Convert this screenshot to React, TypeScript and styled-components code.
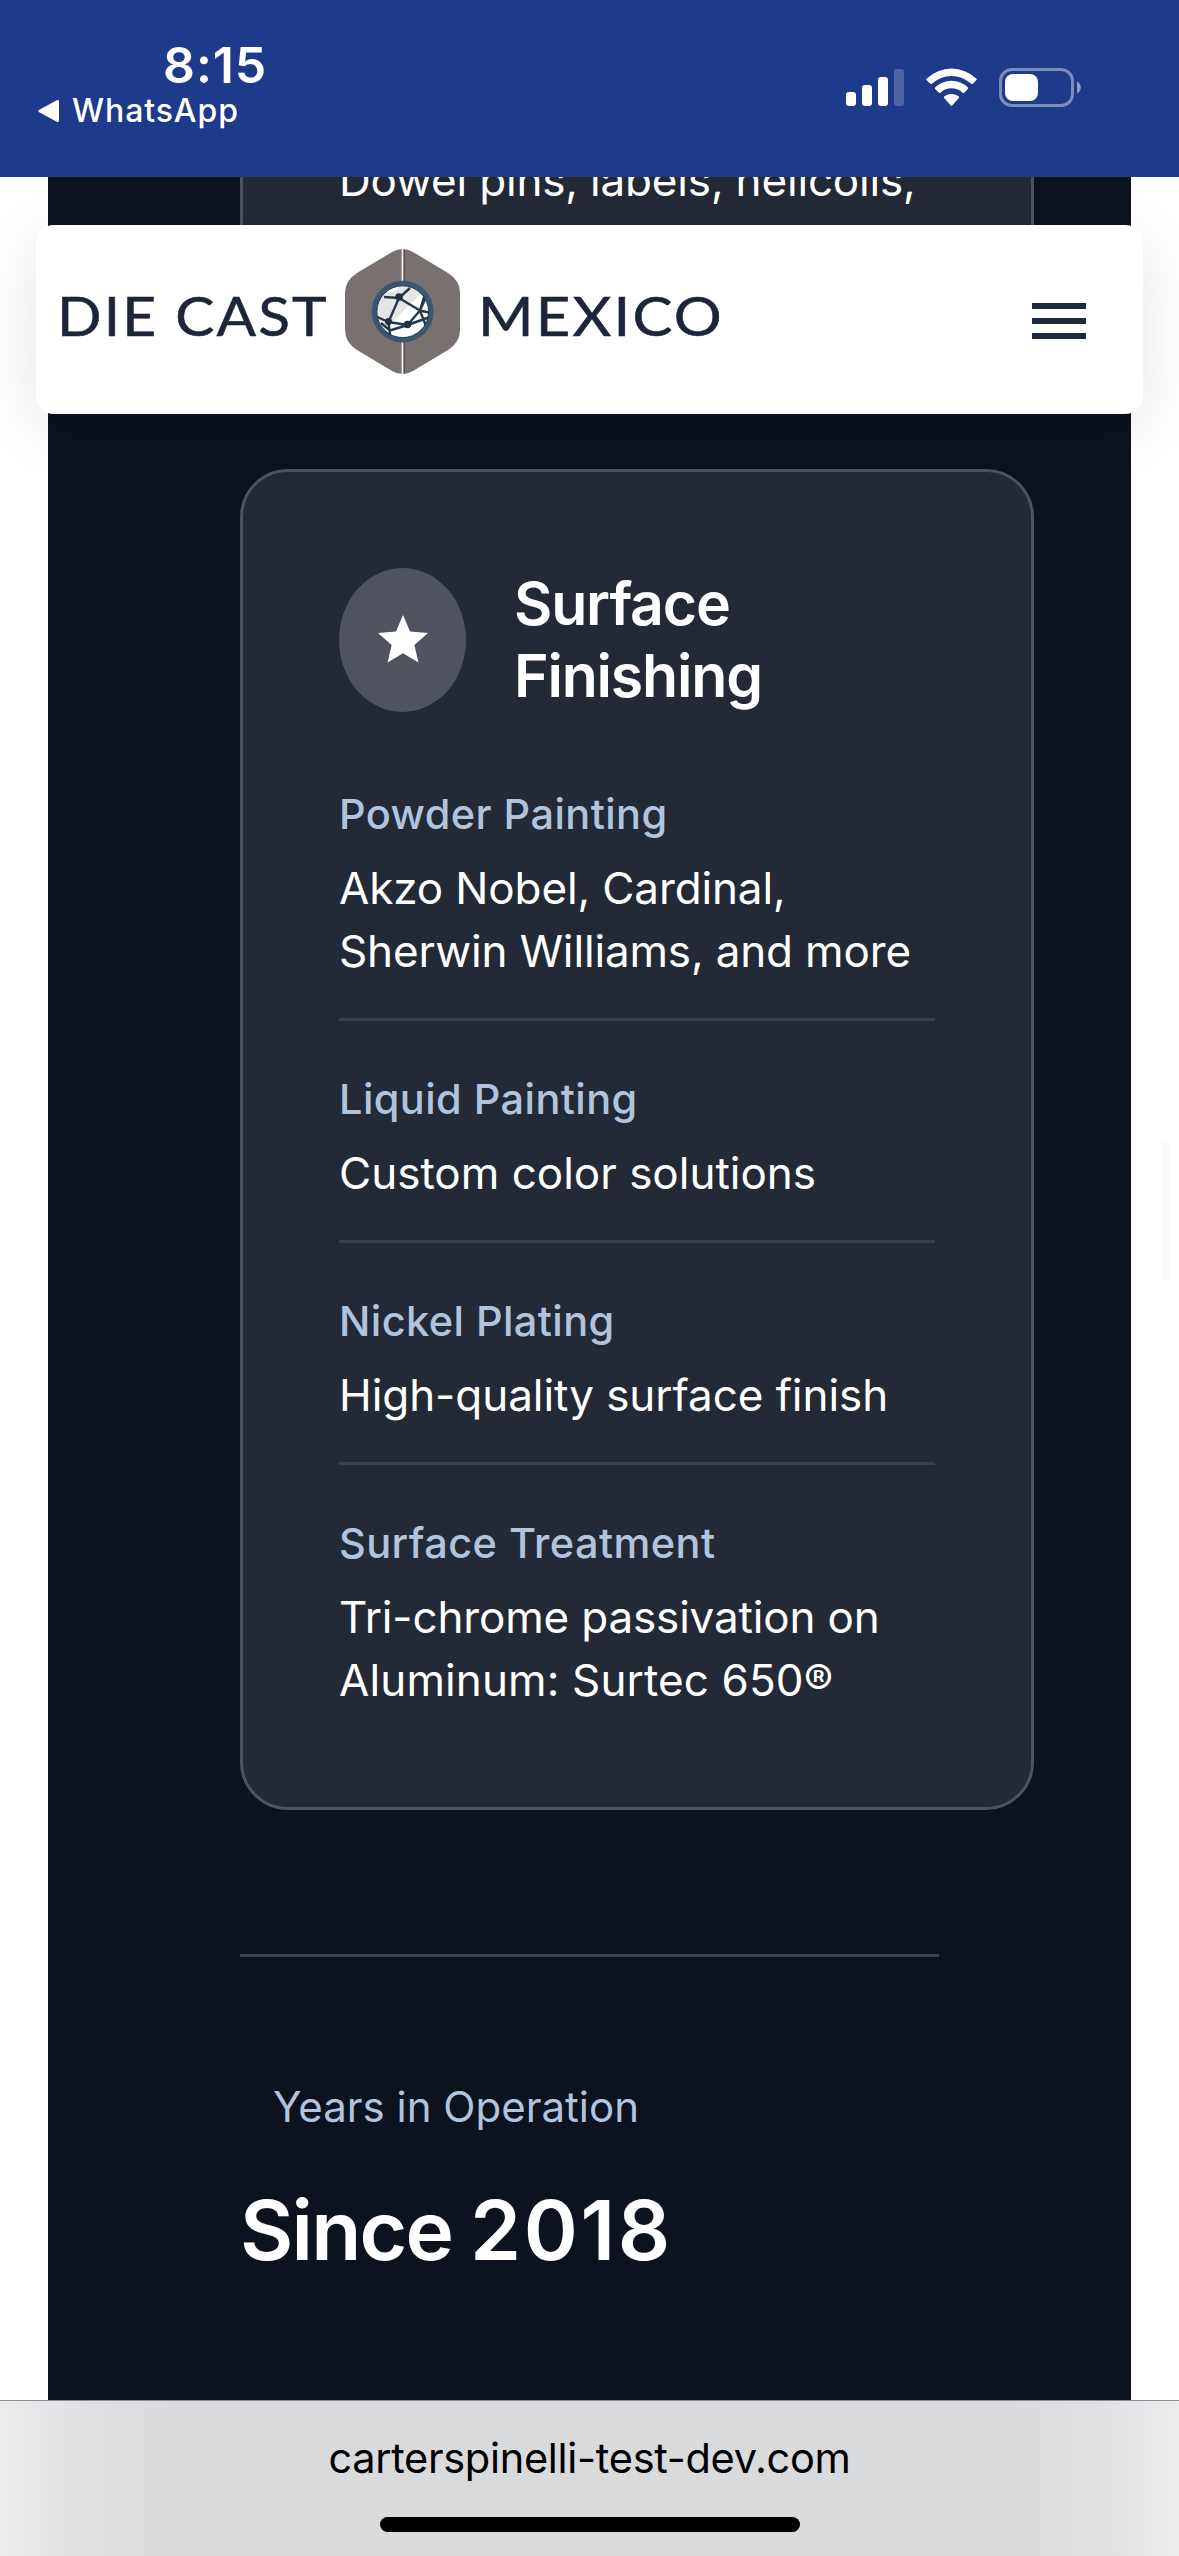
import React from "react";
import styled, { createGlobalStyle } from "styled-components";

const GlobalStyle = createGlobalStyle`
  * { box-sizing: border-box; }
  html, body { margin: 0; padding: 0; background: #fff; }
  body { font-family: Inter, "Liberation Sans", sans-serif; }
  h2, p, dl, dt, dd { margin: 0; font-weight: 400; }
`;

const Screen = styled.div`
  width: 1179px;
  height: 2556px;
  display: flex;
  flex-direction: column;
  overflow: hidden;
  background: #fff;
`;

const StatusBar = styled.header`
  flex: none;
  height: 177px;
  padding: 0 98px 0 38px;
  display: flex;
  justify-content: space-between;
  background: #1e3a8a;
  color: #fff;
`;

const StatusLeft = styled.div`
  display: flex;
  flex-direction: column;
  padding-top: 35px;
`;

const Clock = styled.div`
  padding-left: 125px;
  font-size: 50px;
  line-height: 60px;
  font-weight: 600;
  letter-spacing: 0.9px;
`;

const BackLink = styled.div`
  display: flex;
  align-items: center;
  gap: 12px;
  height: 32px;
  font-size: 32px;
  line-height: 32px;
  font-weight: 500;
  letter-spacing: 0.9px;
`;

const StatusIcons = styled.div`
  display: flex;
  align-items: flex-start;
  padding-top: 68px;
  svg { display: block; }
`;

const SignalIcon = styled.svg` margin-right: 22px; `;
const WifiIcon = styled.svg` margin-right: 22px; `;

const Page = styled.main`
  flex: 1;
  min-height: 0;
  position: relative;
  overflow: hidden;
`;

const Navbar = styled.nav`
  position: absolute;
  z-index: 2;
  top: 48px;
  left: 36px;
  right: 36px;
  height: 189px;
  padding: 0 57px 0 21px;
  display: flex;
  align-items: center;
  justify-content: space-between;
  background: #fff;
  border-radius: 18px;
  box-shadow: 0 14px 64px rgba(0, 0, 0, 0.1);
`;

const Brand = styled.div`
  display: flex;
  align-items: center;
  margin-bottom: 16px;
  color: #1d2538;
  font-family: Lato, "Liberation Sans", sans-serif;
  font-size: 55px;
  line-height: 60px;
`;

const BrandWord = styled.span<{ $width: number; $stretch: number }>`
  width: ${(p) => p.$width}px;
  padding-top: 7px;
  letter-spacing: 2px;
  white-space: nowrap;
  -webkit-text-stroke: 0.6px #1d2538;
  transform: scaleX(${(p) => p.$stretch});
  transform-origin: left center;
`;

const BrandMark = styled.svg`
  display: block;
  margin-right: 18px;
`;

const MenuButton = styled.button`
  width: 54px;
  padding: 0;
  margin-top: 3px;
  border: 0;
  background: none;
  display: flex;
  flex-direction: column;
  gap: 9px;
`;

const MenuBar = styled.span`
  height: 6px;
  background: #1e293b;
`;

const Section = styled.section`
  display: flex;
  flex-direction: column;
  height: 100%;
  margin: 0 48px;
  padding: 0 97px 0 192px;
  background: #0c121e;
`;

const Card = styled.article`
  flex: none;
  border: 3px solid #4e525c;
  border-radius: 48px;
  padding: 96px 96px 95px;
  background: #242a35;
`;

const CardTail = styled(Card)`
  display: flex;
  flex-direction: column;
  height: 220px;
  margin-bottom: 72px;
  padding-top: 0;
  border-top: 0;
  border-radius: 0 0 48px 48px;
`;

const Value = styled.dd<{ $tracking: number }>`
  font-size: 44px;
  line-height: 63px;
  color: #fff;
  white-space: nowrap;
  letter-spacing: ${(p) => p.$tracking}px;
`;

const TailValue = styled.p`
  margin-top: -28px;
  font-size: 44px;
  line-height: 63px;
  color: #fff;
  white-space: nowrap;
  letter-spacing: -0.17px;
`;

const CardHeader = styled.div`
  display: flex;
  align-items: center;
  gap: 48px;
  height: 144px;
  margin-bottom: 72px;
`;

const IconBadge = styled.div`
  flex: none;
  width: 127px;
  height: 144px;
  border-radius: 50%;
  display: flex;
  align-items: center;
  justify-content: center;
  background: #50545e;
`;

const CardTitle = styled.h2`
  font-size: 59px;
  line-height: 72px;
  font-weight: 600;
  color: #fff;
  letter-spacing: -1.2px;
`;

const Item = styled.div<{ $last: boolean }>`
  ${(p) =>
    p.$last
      ? ""
      : "padding-bottom: 35px; margin-bottom: 48px; border-bottom: 3px solid #3a3f4a;"}
`;

const Label = styled.dt`
  margin-bottom: 13px;
  font-size: 41.5px;
  line-height: 60px;
  font-weight: 500;
  color: #b0c4de;
  letter-spacing: 0.42px;
  white-space: nowrap;
`;

const Stats = styled.div`
  flex: none;
  width: 699px;
  margin-top: 144px;
  padding-top: 120px;
  border-top: 3px solid #3c414c;
`;

const StatLabel = styled.p`
  padding-left: 33px;
  font-size: 42px;
  line-height: 60px;
  color: #b0c4de;
`;

const StatValue = styled.p`
  margin-top: 44px;
  font-size: 82px;
  line-height: 100px;
  font-weight: 600;
  color: #fff;
  letter-spacing: -1.8px;
  word-spacing: -1px;
`;

const Year = styled.span`
  letter-spacing: 2.6px;
`;

const ScrollThumb = styled.div`
  position: absolute;
  top: 965px;
  right: 9px;
  width: 9px;
  height: 139px;
  border-radius: 5px;
  background: #fbfbfb;
`;

const AddressBar = styled.footer`
  flex: none;
  height: 156px;
  border-top: 1px solid #8e8c93;
  display: flex;
  flex-direction: column;
  align-items: center;
  background: linear-gradient(
    90deg,
    #ededed 0,
    #e6e7e9 38px,
    #dfe0e2 80px,
    #dbdcde 150px,
    #d9dadc 230px,
    #d9dadc 949px,
    #dbdcde 1029px,
    #dfe0e2 1099px,
    #e6e7e9 1141px,
    #ededed 100%
  );
`;

const Address = styled.div`
  padding-top: 29px;
  font-size: 41.5px;
  line-height: 56px;
  letter-spacing: -0.3px;
  color: #000;
`;

const HomeIndicator = styled.div`
  width: 420px;
  height: 15px;
  margin-top: 31px;
  border-radius: 8px;
  background: #000;
`;

interface Line {
  text: string;
  tracking: number;
}

interface Finish {
  label: string;
  lines: Line[];
}

const finishes: Finish[] = [
  {
    label: "Powder Painting",
    lines: [
      { text: "Akzo Nobel, Cardinal,", tracking: -0.12 },
      { text: "Sherwin Williams, and more", tracking: -0.15 },
    ],
  },
  { label: "Liquid Painting", lines: [{ text: "Custom color solutions", tracking: 0 }] },
  { label: "Nickel Plating", lines: [{ text: "High-quality surface finish", tracking: -0.06 }] },
  {
    label: "Surface Treatment",
    lines: [
      { text: "Tri-chrome passivation on", tracking: -0.16 },
      { text: "Aluminum: Surtec 650®", tracking: 0.12 },
    ],
  },
];

function Status() {
  return (
    <StatusBar>
      <StatusLeft>
        <Clock>8:15</Clock>
        <BackLink>
          <svg width="22" height="22" viewBox="0 0 22 22">
            <path d="M19.5 1.5v19L2 11z" fill="#fff" stroke="#fff" strokeWidth="3" strokeLinejoin="round" />
          </svg>
          WhatsApp
        </BackLink>
      </StatusLeft>
      <StatusIcons>
        <SignalIcon width="58" height="39" viewBox="0 0 58 39" fill="#fff">
          <rect x="0" y="24" width="10" height="14" rx="3" />
          <rect x="16" y="17" width="10" height="21" rx="3" />
          <rect x="32" y="9" width="10" height="29" rx="3" />
          <rect x="48" y="1" width="10" height="37" rx="3" opacity="0.22" />
        </SignalIcon>
        <WifiIcon width="51" height="39" viewBox="0 0 51 39" fill="#fff">
          <path d="M.8 12.3Q-.2 11.4.8 10.4A36 36 0 0 1 50.2 10.4Q51.2 11.4 50.2 12.3L47 15.6Q46 16.6 45 15.6A28.5 28.5 0 0 0 6 15.6Q5 16.6 4 15.6Z" />
          <path d="M9.3 21.2Q8.4 20.2 9.3 19.3A23.5 23.5 0 0 1 41.7 19.3Q42.6 20.2 41.7 21.2L38.3 24.5Q37.3 25.5 36.3 24.5A16 16 0 0 0 14.7 24.5Q13.7 25.5 12.7 24.5Z" />
          <path d="M18.2 29.9Q17.4 29 18.5 28.2A12 12 0 0 1 32.5 28.2Q33.6 29 32.8 29.9L26.4 37.2Q25.5 38.2 24.6 37.2Z" />
        </WifiIcon>
        <svg width="82" height="39" viewBox="0 0 82 39">
          <rect x="1.5" y="1.5" width="72" height="36" rx="11.5" fill="none" stroke="#fff" strokeOpacity="0.42" strokeWidth="3" />
          <rect x="6" y="6" width="33" height="27" rx="8" fill="#fff" />
          <path d="M78 13.5c5 2 5 10 0 12z" fill="#fff" fillOpacity="0.5" />
        </svg>
      </StatusIcons>
    </StatusBar>
  );
}

function HexMark() {
  return (
    <BrandMark width="115" height="125" viewBox="0 0 115 125">
      <path
        d="M47 3Q57.5 -3 68 3L103 24Q115 31.5 115 44V81Q115 93.5 103 101L68 122Q57.5 128 47 122L12 101Q0 93.5 0 81V44Q0 31.5 12 24Z"
        fill="#787170"
      />
      <path d="M57.5 0V125" stroke="#f2f2f2" strokeWidth="1.8" />
      <path d="M59.2 0V125" stroke="#4a4241" strokeWidth="0.9" />
      <circle cx="57.7" cy="62.7" r="28.5" fill="#fff" />
      <path d="M77.5 43A28 28 0 1 0 38 82.5Z" fill="#e5e5e5" />
      <path d="M34 46Q38 39 45 37L56 36.5 50 42Q40 43 34 46Z" fill="#fff" />
      <path d="M43.5 72L62.500 75 45 83Z" fill="#fff" />
      <g stroke="#24384c" strokeWidth="2.4" fill="none">
        <path d="M39 48L54 49 65 39M54 49L43.5 73 30 67M54 49L75 61.5 81 48M43.5 73L45 86M43.5 73L62.5 76 45 81.500M62.5 76L85 68M62.5 76L75 61.5 81 77M75 61.5L86 64M75 61.5L79 48M45 81.5L36 74" />
      </g>
      <g fill="#24303f">
        <circle cx="54" cy="48" r="3.8" />
        <circle cx="43.5" cy="72.5" r="3.5" />
        <circle cx="62.5" cy="75.5" r="3.8" />
      </g>
      <circle cx="57.7" cy="62.7" r="28.4" fill="none" stroke="#3b5672" strokeWidth="5" />
      <circle cx="57.7" cy="62.7" r="25.9" fill="none" stroke="#24384c" strokeWidth="1" />
    </BrandMark>
  );
}

export default function App() {
  return (
    <Screen>
      <GlobalStyle />
      <Status />
      <Page>
        <Navbar>
          <Brand>
            <BrandWord $width={288} $stretch={1.064}>DIE CAST</BrandWord>
            <HexMark />
            <BrandWord $width={250} $stretch={1.088}>MEXICO</BrandWord>
          </Brand>
          <MenuButton aria-label="Menu">
            <MenuBar />
            <MenuBar />
            <MenuBar />
          </MenuButton>
        </Navbar>
        <Section>
          <CardTail>
            <TailValue>Dowel pins, labels, helicoils,</TailValue>
          </CardTail>
          <Card>
            <CardHeader>
              <IconBadge>
                <svg width="60" height="60" viewBox="0 0 24 24" fill="#fff">
                  <path d="M12 17.27L18.18 21l-1.64-7.03L22 9.24l-7.19-.61L12 2 9.19 8.63 2 9.24l5.46 4.73L5.82 21z" />
                </svg>
              </IconBadge>
              <CardTitle>
                Surface
                <br />
                Finishing
              </CardTitle>
            </CardHeader>
            <dl>
              {finishes.map((f, i) => (
                <Item key={f.label} $last={i === finishes.length - 1}>
                  <Label>{f.label}</Label>
                  {f.lines.map((line) => (
                    <Value key={line.text} $tracking={line.tracking}>
                      {line.text}
                    </Value>
                  ))}
                </Item>
              ))}
            </dl>
          </Card>
          <Stats>
            <StatLabel>Years in Operation</StatLabel>
            <StatValue>
              Since <Year>2018</Year>
            </StatValue>
          </Stats>
        </Section>
        <ScrollThumb />
      </Page>
      <AddressBar>
        <Address>carterspinelli-test-dev.com</Address>
        <HomeIndicator />
      </AddressBar>
    </Screen>
  );
}
